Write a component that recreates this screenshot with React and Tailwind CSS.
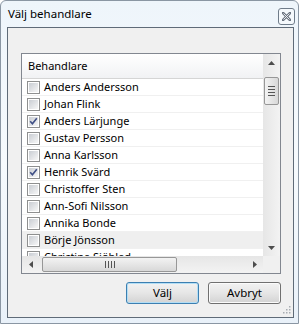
import React from "react";

const people = [
  { name: "Anders Andersson", checked: false },
  { name: "Johan Flink", checked: false },
  { name: "Anders Lärjunge", checked: true },
  { name: "Gustav Persson", checked: false },
  { name: "Anna Karlsson", checked: false },
  { name: "Henrik Svärd", checked: true },
  { name: "Christoffer Sten", checked: false },
  { name: "Ann-Sofi Nilsson", checked: false },
  { name: "Annika Bonde", checked: false },
  { name: "Börje Jönsson", checked: false, hover: true },
  { name: "Christina Sjöblad", checked: false },
];

const Checkbox = ({ checked }) => (
  <span className="flex h-[13px] w-[13px] shrink-0 items-center justify-center border border-[#8e8f8f] bg-white">
    <span className="flex h-[9px] w-[9px] items-center justify-center bg-gradient-to-br from-[#c9cdd3] to-[#f7f7f7]">
      {checked && (
        <svg width="9" height="9" viewBox="0 0 9 9">
          <path d="M1.2 4.3 L3.4 6.8 L7.8 1.2" fill="none" stroke="#3f4f86" strokeWidth="1.6" />
        </svg>
      )}
    </span>
  </span>
);

const Arrow = ({ dir }) => {
  const d = {
    up: "M0 4 L3.5 0 L7 4 Z",
    down: "M0 0 L7 0 L3.5 4 Z",
    left: "M4 0 L4 7 L0 3.5 Z",
    right: "M0 0 L4 3.5 L0 7 Z",
  }[dir];
  const vertical = dir === "up" || dir === "down";
  return (
    <svg width={vertical ? 7 : 4} height={vertical ? 4 : 7} viewBox={vertical ? "0 0 7 4" : "0 0 4 7"}>
      <path d={d} fill="#4d4d4d" />
    </svg>
  );
};

const Button = ({ children, focused }) => (
  <button
    type="button"
    className={
      "flex h-[22px] w-[73px] items-center justify-center rounded-[3px] border bg-gradient-to-b from-[#f2f2f2] via-[#e6e6e6] to-[#d3d3d3] text-[11.5px] text-black " +
      (focused ? "border-[#3c7fb1] shadow-[inset_0_0_0_1px_#b3def5]" : "border-[#707070] shadow-[inset_0_0_0_1px_#fbfbfb]")
    }
  >
    {children}
  </button>
);

export default function App() {
  return (
    <div className="h-[326px] w-[300px] overflow-hidden bg-white" style={{ fontFamily: '"Noto Sans", sans-serif' }}>
      <div className="flex h-[324px] w-[299px] flex-col rounded-t-[6px] border border-[#8a96a3] bg-gradient-to-b from-[#eef5fb] via-[#f6fafd] to-[#e9f1f9]">
        <div className="flex h-[26px] shrink-0 items-start justify-between">
          <span className="pl-[7px] pt-[5px] text-[11.5px] leading-[16px] text-black">Välj behandlare</span>
          <span className="mr-[3px] mt-[7px] flex h-[17px] w-[17px] items-center justify-center rounded-[3px] border border-[#6f7c8a] bg-white/40">
            <svg width="9" height="9" viewBox="0 0 9 9">
              <path d="M1 1 L8 8 M8 1 L1 8" stroke="#6b7480" strokeWidth="2.6" strokeLinecap="square" />
              <path d="M1.5 1.5 L7.5 7.5 M7.5 1.5 L1.5 7.5" stroke="#f4f6f8" strokeWidth="0.9" />
            </svg>
          </span>
        </div>

        <div className="ml-[6px] mr-[4px] flex h-[291px] flex-col border border-[#5f6b78] bg-[#f0f0f0] pl-[13px] pr-[12px] pt-[25px]">
          <div className="flex h-[221px] w-[260px] flex-col border border-[#828790] bg-white">
            <div className="flex h-[202px]">
              <div className="w-[241px] overflow-hidden">
                <div className="flex h-[25px] items-center border-b border-[#d5d5d5] bg-gradient-to-b from-white to-[#f1f2f4] pl-[6px] text-[11px] text-black">
                  Behandlare
                </div>
                {people.map((p) => (
                  <div
                    key={p.name}
                    className={
                      "flex h-[17px] items-center gap-[4px] border-b border-[#f0f0f0] pl-[5px] text-[11px] text-black " +
                      (p.hover ? "bg-[#efefef]" : "bg-white")
                    }
                  >
                    <Checkbox checked={p.checked} />
                    <span className="whitespace-nowrap leading-[16px]">{p.name}</span>
                  </div>
                ))}
              </div>
              <div className="flex w-[17px] flex-col bg-gradient-to-r from-[#e6e6e6] to-[#f3f3f3]">
                <div className="flex h-[17px] items-center justify-center">
                  <Arrow dir="up" />
                </div>
                <div className="flex-1">
                  <div className="mx-auto mt-[6px] flex h-[28px] w-[15px] flex-col items-center justify-center gap-[2px] rounded-[2px] border border-[#979797] bg-gradient-to-r from-[#f3f3f3] to-[#d8d8d8]">
                    <span className="h-px w-[7px] bg-[#555]" />
                    <span className="h-px w-[7px] bg-[#555]" />
                    <span className="h-px w-[7px] bg-[#555]" />
                    <span className="h-px w-[7px] bg-[#555]" />
                  </div>
                </div>
                <div className="flex h-[17px] items-center justify-center">
                  <Arrow dir="down" />
                </div>
              </div>
            </div>
            <div className="flex h-[17px]">
              <div className="flex w-[241px] items-center bg-gradient-to-b from-[#e6e6e6] to-[#f3f3f3]">
                <div className="flex h-[17px] w-[17px] items-center justify-center">
                  <Arrow dir="left" />
                </div>
                <div className="ml-[3px] flex h-[15px] w-[135px] items-center justify-center gap-[2px] rounded-[2px] border border-[#979797] bg-gradient-to-b from-[#f3f3f3] to-[#d8d8d8]">
                  <span className="h-[7px] w-px bg-[#555]" />
                  <span className="h-[7px] w-px bg-[#555]" />
                  <span className="h-[7px] w-px bg-[#555]" />
                  <span className="h-[7px] w-px bg-[#555]" />
                </div>
                <div className="flex-1" />
                <div className="flex h-[17px] w-[17px] items-center justify-center">
                  <Arrow dir="right" />
                </div>
              </div>
              <div className="w-[17px] bg-[#f0f0f0]" />
            </div>
          </div>

          <div className="mt-[8px] flex justify-end gap-[9px]">
            <Button focused>Välj</Button>
            <Button>Avbryt</Button>
          </div>

          <div className="mr-[-10px] mt-[2px] flex justify-end">
            <svg width="8" height="8" viewBox="0 0 8 8">
              <rect x="6" y="0" width="1.5" height="1.5" fill="#a8adb3" />
              <rect x="3" y="3" width="1.5" height="1.5" fill="#a8adb3" />
              <rect x="6" y="3" width="1.5" height="1.5" fill="#a8adb3" />
              <rect x="0" y="6" width="1.5" height="1.5" fill="#a8adb3" />
              <rect x="3" y="6" width="1.5" height="1.5" fill="#a8adb3" />
              <rect x="6" y="6" width="1.5" height="1.5" fill="#a8adb3" />
            </svg>
          </div>
        </div>
      </div>
    </div>
  );
}
